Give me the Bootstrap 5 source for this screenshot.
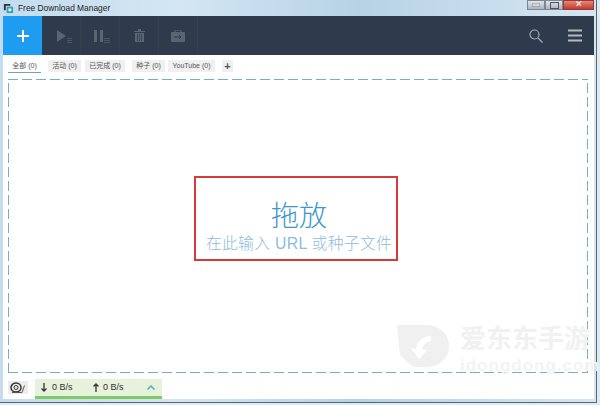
<!doctype html>
<html lang="zh">
<head>
<meta charset="utf-8">
<title>Free Download Manager</title>
<link href="https://cdn.jsdelivr.net/npm/bootstrap@5.3.5/dist/css/bootstrap.min.css" rel="stylesheet">
<style>
body { width: 600px; height: 405px; overflow: hidden; font-family: "Liberation Sans", "Noto Sans CJK SC", sans-serif; background: #dfe9f0; }
.win-frame { width: 597px; height: 403px; padding: 0 2px 3px 3px; background: linear-gradient(90deg, #c3dcee, #d4e6f3 30%, #b7d2e6 60%, #d5e6f2); border-right: 1px solid #5a6672; border-bottom: 1px solid #5a6672; }
.title-bar { height: 16px; font-size: 8.4px; color: #222; }
.app-logo { width: 11px; height: 11px; margin-left: 0; }
.win-btns { height: 10px; margin-top: -6px; }
.win-btn { width: 18px; height: 10px; background: linear-gradient(#dfe6ec, #a8b4bf); border: 1px solid #7d8791; }
.win-close { width: 31px; background: linear-gradient(#e8867a, #c4392c); border-color: #8c4038; color: #fff; font-size: 9px; line-height: 7px; }
.app-pane { height: 383px; background: #fff; }
.tool-bar { height: 39px; background: #2f3a4c; }
.add-btn { width: 39px; background: #1e9cf0; color: #fff; }
.tool-icon { width: 39px; border-right: 1px solid #37424f; }
.play-icon { padding-left: 5px; }
.pause-icon { padding-left: 2px; }
.right-icon { width: 39px; }
.tab-strip { height: 24px; padding: 5px 0 0 5px; }
.tab-pill { font-size: 7px; line-height: 12px; height: 12px; color: #555; background: #f0f0f0; text-align: center; margin-right: 4px; }
.tab-pill.on { background: transparent; border-bottom: 1px solid #7aa0a8; height: 13px; width: 33px; margin-right: 7px; }
.tab-act { width: 33px; }
.tab-done { width: 40px; margin-right: 7px; }
.tab-seed { width: 33px; margin-right: 3px; }
.tab-yt { width: 47px; margin-right: 7px; }
.tab-plus { font-size: 11px; width: 11px; font-weight: 700; color: #555; }
.drop-zone { height: 294px; margin: 0 6px 0 5px;
  background:
    repeating-linear-gradient(90deg, #6fb2c5 0 10px, transparent 10px 14px) top left / 100% 1px no-repeat,
    repeating-linear-gradient(90deg, #6fb2c5 0 10px, transparent 10px 14px) bottom left / 100% 1px no-repeat,
    repeating-linear-gradient(0deg, #6fb2c5 0 10px, transparent 10px 14px) top left / 1px 100% no-repeat,
    repeating-linear-gradient(0deg, #6fb2c5 0 10px, transparent 10px 14px) top right / 1px 100% no-repeat;
}
.red-box { width: 204px; height: 85px; border: 2px solid #d8393a; margin: 0 4px 16px 0; padding-left: 6px; }
.drop-title { font-size: 28px; line-height: 31px; color: #3d97cc; font-weight: 300; margin-top: 23px; }
.drop-sub { font-size: 15.800px; line-height: 19px; color: #8dbcdc; font-weight: 300; letter-spacing: .3px; margin-top: 2px; white-space: nowrap; }
.status-row { height: 26px; padding: 6px 0 0 5px; }
.snail-btn { width: 20px; height: 13px; margin-top: 2px; background: #ececec; }
.speed-box { width: 127px; height: 20px; margin-left: 7px; background: #e6f2dc; border-bottom: 3px solid #7fcb63; font-size: 9px; color: #333; }
.arrow-down { margin-left: 6px; }
.val-down { margin-left: 5px; width: 41px; }
.val-up { margin-left: 4px; width: 44px; }
.watermark { left: 397px; top: 324px; }
.wm-logo { width: 52px; height: 44px; }
.wm-text { margin-left: 11px; width: 132px; }
.wm-name { font-size: 26px; line-height: 26px; height: 26px; overflow: hidden; font-weight: 700; color: #f1f1f1; font-family: "Noto Sans CJK SC", sans-serif; white-space: nowrap; }
.wm-url { font-size: 17px; line-height: 18px; margin-top: 7px; font-weight: 700; letter-spacing: 1px; color: #f3f3f3; white-space: nowrap; }
</style>
</head>
<body>
<div class="win-frame position-relative">
  <div class="title-bar d-flex align-items-center">
    <svg class="app-logo" viewBox="0 0 12 12"><path d="M1 1h7v2H3v5H1z" fill="#333"/><rect x="4" y="4" width="7" height="7" fill="#2aa6b8"/><rect x="6" y="6" width="3" height="3" fill="#fff"/></svg>
    <span class="ms-1">Free Download Manager</span>
    <div class="win-btns ms-auto d-flex">
      <div class="win-btn d-flex align-items-center justify-content-center"><svg width="8" height="4"><rect y="1" width="8" height="2" fill="#fff" stroke="#555" stroke-width=".5"/></svg></div>
      <div class="win-btn d-flex align-items-center justify-content-center"><svg width="9" height="7"><rect x=".5" y=".5" width="8" height="6" fill="none" stroke="#555"/></svg></div>
      <div class="win-btn win-close text-center">✕</div>
    </div>
  </div>
  <div class="app-pane d-flex flex-column">
    <div class="tool-bar d-flex">
      <div class="add-btn d-flex align-items-center justify-content-center">
        <svg width="14" height="14"><path d="M7 1v12M1 7h12" stroke="#fff" stroke-width="2"/></svg>
      </div>
      <div class="tool-icon play-icon d-flex align-items-center justify-content-center">
        <svg width="16" height="14"><path d="M1 1l9 6-9 6z" fill="#5b6572"/><path d="M11 9h5v1h-5zM11 11h5v1h-5zM11 13h5v1h-5z" fill="#4c5663"/></svg>
      </div>
      <div class="tool-icon pause-icon d-flex align-items-center justify-content-center">
        <svg width="17" height="14"><path d="M1 1h3v12H1zM7 1h3v12H7z" fill="#5b6572"/><path d="M11 9h6v1h-6zM11 11h6v1h-6zM11 13h6v1h-6z" fill="#4c5663"/></svg>
      </div>
      <div class="tool-icon d-flex align-items-center justify-content-center">
        <svg width="11" height="13"><path d="M0 2h11v1H0zM4 0h3v2H4z" fill="#5b6572"/><path d="M1 4h9v9H1z" fill="#5b6572"/><path d="M3.500 5v7M5.500 5v7M7.500 5v7" stroke="#2f3a4c" stroke-width=".7"/></svg>
      </div>
      <div class="tool-icon d-flex align-items-center justify-content-center">
        <svg width="14" height="12"><path d="M4 2V0h6v2" fill="none" stroke="#5b6572"/><rect y="2" width="14" height="10" rx="1" fill="#5b6572"/><path d="M3 7h7M8 5l2 2-2 2" fill="none" stroke="#2f3a4c"/></svg>
      </div>
      <div class="right-icon ms-auto d-flex align-items-center justify-content-center">
        <svg width="14" height="14"><circle cx="5.500" cy="5.500" r="4.500" fill="none" stroke="#a3aab3" stroke-width="1.200"/><path d="M9 9l4.500 4.500" stroke="#a3aab3" stroke-width="1.200"/></svg>
      </div>
      <div class="right-icon d-flex align-items-center justify-content-center">
        <svg width="14" height="13"><path d="M0 1.500h14M0 6.500h14M0 11.500h14" stroke="#b3b9c0" stroke-width="2"/></svg>
      </div>
    </div>
    <div class="tab-strip d-flex align-items-start">
      <span class="tab-pill on">全部 (0)</span>
      <span class="tab-pill tab-act">活动 (0)</span>
      <span class="tab-pill tab-done">已完成 (0)</span>
      <span class="tab-pill tab-seed">种子 (0)</span>
      <span class="tab-pill tab-yt">YouTube (0)</span>
      <span class="tab-pill tab-plus">+</span>
    </div>
    <div class="drop-zone d-flex align-items-center justify-content-center">
      <div class="red-box text-center">
        <div class="drop-title">拖放</div>
        <div class="drop-sub">在此输入 URL 或种子文件</div>
      </div>
    </div>
    <div class="status-row d-flex align-items-start">
      <div class="snail-btn d-flex align-items-center justify-content-center">
        <svg width="16" height="11"><ellipse cx="6" cy="5.500" rx="5" ry="4.500" fill="none" stroke="#333" stroke-width="1.500"/><circle cx="6" cy="5.500" r="2" fill="none" stroke="#333"/><path d="M2 10.500h10l2.500-7" fill="none" stroke="#555"/></svg>
      </div>
      <div class="speed-box d-flex align-items-center">
        <svg class="arrow-down" width="6" height="9"><path d="M3 0v8M.5 5.500L3 8l2.500-2.500" fill="none" stroke="#333" stroke-width="1.300"/></svg>
        <span class="val-down">0 B/s</span>
        <svg width="6" height="9"><path d="M3 9V1M.5 3.500L3 1l2.500 2.500" fill="none" stroke="#333" stroke-width="1.300"/></svg>
        <span class="val-up">0 B/s</span>
        <svg width="8" height="5"><path d="M.5 4.500L4 1l3.500 3.500" fill="none" stroke="#4fb0b5" stroke-width="1.500"/></svg>
      </div>
    </div>
  </div>
  <div class="watermark position-absolute d-flex align-items-start">
    <svg class="wm-logo" viewBox="0 0 52 44"><path d="M0 1h30c12 0 22 9 22 21s-10 21-22 21H16L3 31z" fill="#f0f0f0"/><path d="M34 12c-8 0-14 5-15 13l-5-1 8 11 8-9-5-1c1-4 4-7 9-8z" fill="#fff"/></svg>
    <div class="wm-text">
      <div class="wm-name">爱东东手游</div>
      <div class="wm-url">idongdong.com</div>
    </div>
  </div>
</div>
<script src="https://cdn.jsdelivr.net/npm/bootstrap@5.3.5/dist/js/bootstrap.bundle.min.js"></script>
</body>
</html>
